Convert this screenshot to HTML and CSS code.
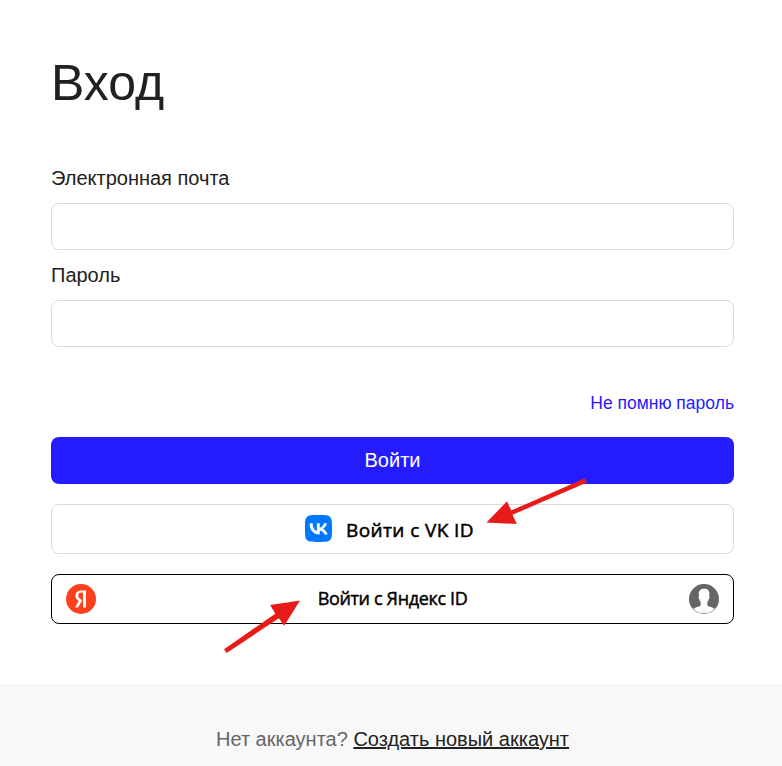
FILE: index.html
```html
<!DOCTYPE html>
<html lang="ru">
<head>
<meta charset="utf-8">
<title>Вход</title>
<link rel="stylesheet" href="styles.css">
</head>
<body>
<main class="login">
  <h1 class="title">Вход</h1>
  <form class="form">
    <label class="label" for="email">Электронная почта</label>
    <input class="input" id="email" type="email">
    <label class="label" for="password">Пароль</label>
    <input class="input" id="password" type="password">
    <a class="forgot" href="#"><span class="forgot-text">Не помню пароль</span></a>
    <button class="button primary" type="button"><span class="primary-text">Войти</span></button>
    <button class="button vk" type="button">
      <svg class="vk-logo" viewBox="0 0 27 27"><path fill="#07f" d="M0 13C0 6.900 0 3.800 1.900 1.900S6.900 0 13 0h1c6.100 0 9.200 0 11.100 1.900S27 6.900 27 13v1c0 6.100 0 9.200-1.900 11.100S20.100 27 14 27h-1c-6.100 0-9.200 0-11.100-1.900S0 20.100 0 14z"/><path fill="#fff" d="M14.370 19.450C8.210 19.450 4.700 15.230 4.560 8.210h3.080c.1 5.150 2.380 7.340 4.180 7.790V8.210h2.910v4.440c1.780-.19 3.650-2.210 4.280-4.440h2.900c-.48 2.740-2.500 4.760-3.940 5.590 1.440.68 3.740 2.440 4.620 5.650H19.400c-.69-2.130-2.390-3.780-4.670-4.010v4.010z"/></svg>
      <span class="vk-text">Войти с VK ID</span>
    </button>
    <button class="button yandex" type="button">
      <svg class="round-icon" viewBox="0 0 30 30"><circle cx="15" cy="15" r="15" fill="#fc3f1d"/><path fill="#fff" d="M17 8.500h-1.300c-2.250 0-3.430 1.140-3.430 2.820 0 1.900.82 2.790 2.490 3.920l1.380.93L12.100 23.500H9l3.700-6.380c-2.050-1.470-3.300-2.900-3.300-5.310 0-3.030 2.110-5.390 6.120-5.390H20V23.500h-3z"/></svg>
      <span class="yandex-text">Войти с Яндекс ID</span>
      <svg class="round-icon" viewBox="0 0 30 30"><circle cx="15" cy="15" r="15" fill="#666"/><path fill="#fff" d="M9.800 10.200C9.500 6.800 11.800 4.800 15.200 4.800s5.700 2 5.200 5.600l-.2 2.200c.7.300.4 2.500-.6 2.900-.4 1.300-.8 2.200-1.300 2.900v2.500c.2 1.300 1.800 1.500 3.500 2.100 1.600.5 2.900 1 3.900 1.700A14.200 14.200 0 0 1 15 29.200 14.200 14.200 0 0 1 4.300 24.700c1-.7 2.300-1.200 3.900-1.700 1.700-.6 3.300-.8 3.500-2.100v-2.500c-.5-.7-.9-1.600-1.200-2.900-1-.4-1.300-2.600-.5-2.900z"/></svg>
    </button>
  </form>
</main>
<footer class="footer">
  <p class="signup"><span>Нет аккаунта?</span> <a class="signup-link" href="#">Создать новый аккаунт</a></p>
</footer>
<svg class="arrows" viewBox="0 0 782 766"><path d="M585 478.300 587 482.500 512.500 514.800 516.800 524 486.500 522.600 507 501.300 511.300 510.500ZM224 649.200 275.300 613.700 270.200 605 300 600.400 284.200 625.800 278.800 618.200 226.700 653Z"/></svg>
</body>
</html>
```
FILE: styles.css
```css
* { box-sizing: border-box; }
body {
  margin: 0;
  height: 766px;
  overflow: hidden;
  display: flex;
  flex-direction: column;
  background: #fff;
  color: #212121;
  font: 20px/30px "Liberation Sans", Arial, sans-serif;
}
.login { height: 684px; padding: 53px 48px 0 51px; }
.title { margin: 0 0 50px; font-size: 50px; line-height: 60px; font-weight: 400; }
.form { display: flex; flex-direction: column; }
.label { margin-bottom: 10px; }
.input {
  width: 100%;
  height: 47px;
  margin: 0 0 10px;
  padding: 0 16px;
  border: 1px solid #d9d9d9;
  border-radius: 8px;
  background: #fff;
  font: inherit;
}
.forgot {
  align-self: flex-end;
  margin: 32px 0 20px;
  color: #241cff;
  font-size: 17.5px;
  line-height: 28px;
  text-decoration: none;
}
.button {
  display: flex;
  align-items: center;
  justify-content: center;
  width: 100%;
  height: 50px;
  margin: 0 0 20px;
  padding: 0 14px;
  border: 1px solid #d9d9d9;
  border-radius: 8px;
  background: #fff;
  color: #000;
  font: 500 18px/28px "Open Sans", sans-serif;
}
.primary {
  height: 47px;
  padding-bottom: 2px;
  border: 0;
  background: #241cff;
  color: #fff;
  font: 20px/30px "Liberation Sans", Arial, sans-serif;
}
.vk { gap: 14px; padding: 0 16px 2px 13px; font-size: 19px; }
.vk-logo { width: 27px; height: 27px; }
.vk-text {
  width: 131px;
  padding-top: 3px;
  white-space: nowrap;
  text-align: left;
  letter-spacing: 0.4px;
  -webkit-text-stroke: 0.5px #000;
}
.yandex { justify-content: space-between; border-color: #000; }
.yandex-text { padding-bottom: 2px; letter-spacing: -0.35px; -webkit-text-stroke: 0.45px #000; }
.round-icon { width: 30px; height: 30px; }
.footer { flex: 1; padding-top: 40px; background: #f8f8f8; color: #666; }
.signup { margin: 0; padding-left: 3px; text-align: center; }
.signup-link { color: #212121; }
.arrows {
  position: absolute;
  top: 0;
  left: 0;
  width: 782px;
  height: 766px;
  fill: #e81b1b;
  pointer-events: none;
}
```
